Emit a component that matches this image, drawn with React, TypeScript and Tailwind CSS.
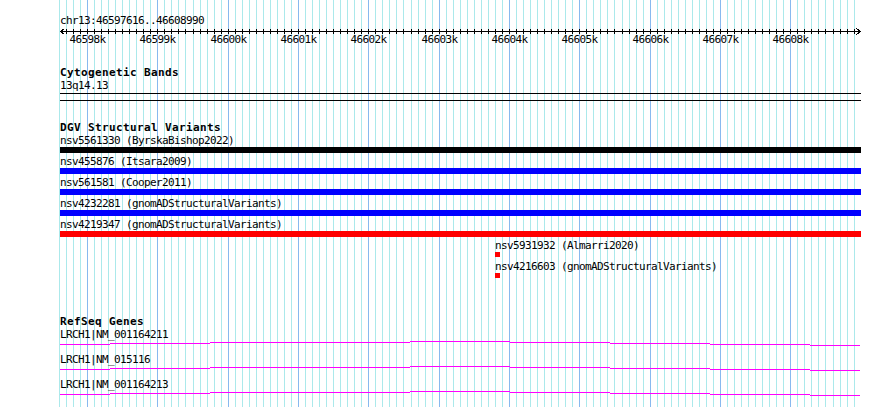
const START = 46597616;
const END = 46608990;
const TRACK_W = 800;
const LEFT = 60;

// genome position -> pixel offset inside the track
const bpToPx = (bp: number) => Math.round(((bp - START) * TRACK_W) / (END - START + 1));

const gridPositions = Array.from({ length: 114 }, (_, i) => 46597600 + i * 100);
const kbPositions = Array.from({ length: 11 }, (_, i) => 46598000 + i * 1000);

const variants = [
  { label: "nsv5561330 (ByrskaBishop2022)", color: "bg-black" },
  { label: "nsv455876 (Itsara2009)", color: "bg-[#0000ff]" },
  { label: "nsv561581 (Cooper2011)", color: "bg-[#0000ff]" },
  { label: "nsv4232281 (gnomADStructuralVariants)", color: "bg-[#0000ff]" },
  { label: "nsv4219347 (gnomADStructuralVariants)", color: "bg-[#ff0000]" },
];

const smallVariants = ["nsv5931932 (Almarri2020)", "nsv4216603 (gnomADStructuralVariants)"];

const genes = ["LRCH1|NM_001164211", "LRCH1|NM_015116", "LRCH1|NM_001164213"];

// gene line: x breakpoints and y offsets per segment
const geneBreaks = [0, 50, 150, 250, 350, 450, 550, 650, 750, 800];
const geneYs = [4, 3, 2, 2, 1, 2, 3, 4, 5];

function GridBackground() {
  return (
    <svg className="absolute inset-0" width={890} height={407} shapeRendering="crispEdges">
      {gridPositions.map((pos) => (
        <rect
          key={pos}
          x={LEFT + bpToPx(pos)}
          y={0}
          width={1}
          height={407}
          fill={pos % 1000 === 0 ? "#88b9ef" : "#abe9eb"}
        />
      ))}
    </svg>
  );
}

function Ruler() {
  return (
    <svg width={802} height={9} className="block overflow-visible" shapeRendering="crispEdges">
      <rect x={0} y={5} width={801} height={1} fill="black" />
      {gridPositions.slice(1).map((pos) => (
        <rect key={pos} x={bpToPx(pos)} y={3} width={1} height={5} fill="black" />
      ))}
      <path d="M4.5 2.5 L0.5 5.5 L4.5 8.5" stroke="black" fill="none" />
      <path d="M796.5 2.5 L800.5 5.5 L796.5 8.5" stroke="black" fill="none" />
    </svg>
  );
}

function TrackTitle({ children, className = "" }: { children: string; className?: string }) {
  return (
    <div className={`h-[10px] text-[11px] leading-[10px] font-bold tracking-[0.38px] whitespace-nowrap ${className}`}>
      {children}
    </div>
  );
}

function Label({ children, className = "" }: { children: string; className?: string }) {
  return (
    <div className={`h-[10px] text-[11px] leading-[10px] tracking-[-0.62px] whitespace-nowrap ${className}`}>
      {children}
    </div>
  );
}

function GeneLine() {
  return (
    <svg width={800} height={15} className="block" shapeRendering="crispEdges">
      {geneYs.map((y, i) => (
        <rect
          key={i}
          x={geneBreaks[i]}
          y={y}
          width={geneBreaks[i + 1] - geneBreaks[i]}
          height={1}
          fill="#ff00ff"
        />
      ))}
    </svg>
  );
}

export default function App() {
  return (
    <div className="relative w-[890px] h-[407px] overflow-hidden bg-white text-black font-['DejaVu_Sans_Mono',monospace]">
      <GridBackground />

      <div className="relative ml-[60px] w-[800px] flex flex-col">
        {/* ruler */}
        <Label className="mt-[16px]">chr13:46597616..46608990</Label>
        <Ruler />
        <div className="relative h-[10px]">
          {kbPositions.map((pos) => (
            <span
              key={pos}
              className="absolute top-0 -translate-x-1/2 text-[11px] leading-[10px] tracking-[-0.62px] whitespace-nowrap"
              style={{ left: bpToPx(pos) + 0.5 }}
            >
              {pos / 1000}k
            </span>
          ))}
        </div>

        {/* cytogenetic bands */}
        <TrackTitle className="mt-[23px]">Cytogenetic Bands</TrackTitle>
        <Label className="mt-[3px]">13q14.13</Label>
        <div className="mt-[2px] h-px w-[801px] bg-black" />
        <div className="mt-[6px] h-px w-[801px] bg-black" />

        {/* DGV */}
        <TrackTitle className="mt-[22px]">DGV Structural Variants</TrackTitle>
        <div className="mt-[3px] flex flex-col">
          {variants.map((v) => (
            <div key={v.label} className="h-[21px] flex flex-col">
              <Label>{v.label}</Label>
              <div className={`mt-px h-[6px] w-[801px] ${v.color}`} />
            </div>
          ))}
          {smallVariants.map((label) => (
            <div key={label} className="h-[21px] flex flex-col pl-[435px]">
              <Label>{label}</Label>
              <div className="mt-px h-[5px] w-[5px] bg-[#ff0000]" />
            </div>
          ))}
        </div>

        {/* RefSeq */}
        <TrackTitle className="mt-[34px]">RefSeq Genes</TrackTitle>
        <div className="mt-[3px] flex flex-col">
          {genes.map((g) => (
            <div key={g} className="h-[25px] flex flex-col">
              <Label>{g}</Label>
              <GeneLine />
            </div>
          ))}
        </div>
      </div>
    </div>
  );
}
